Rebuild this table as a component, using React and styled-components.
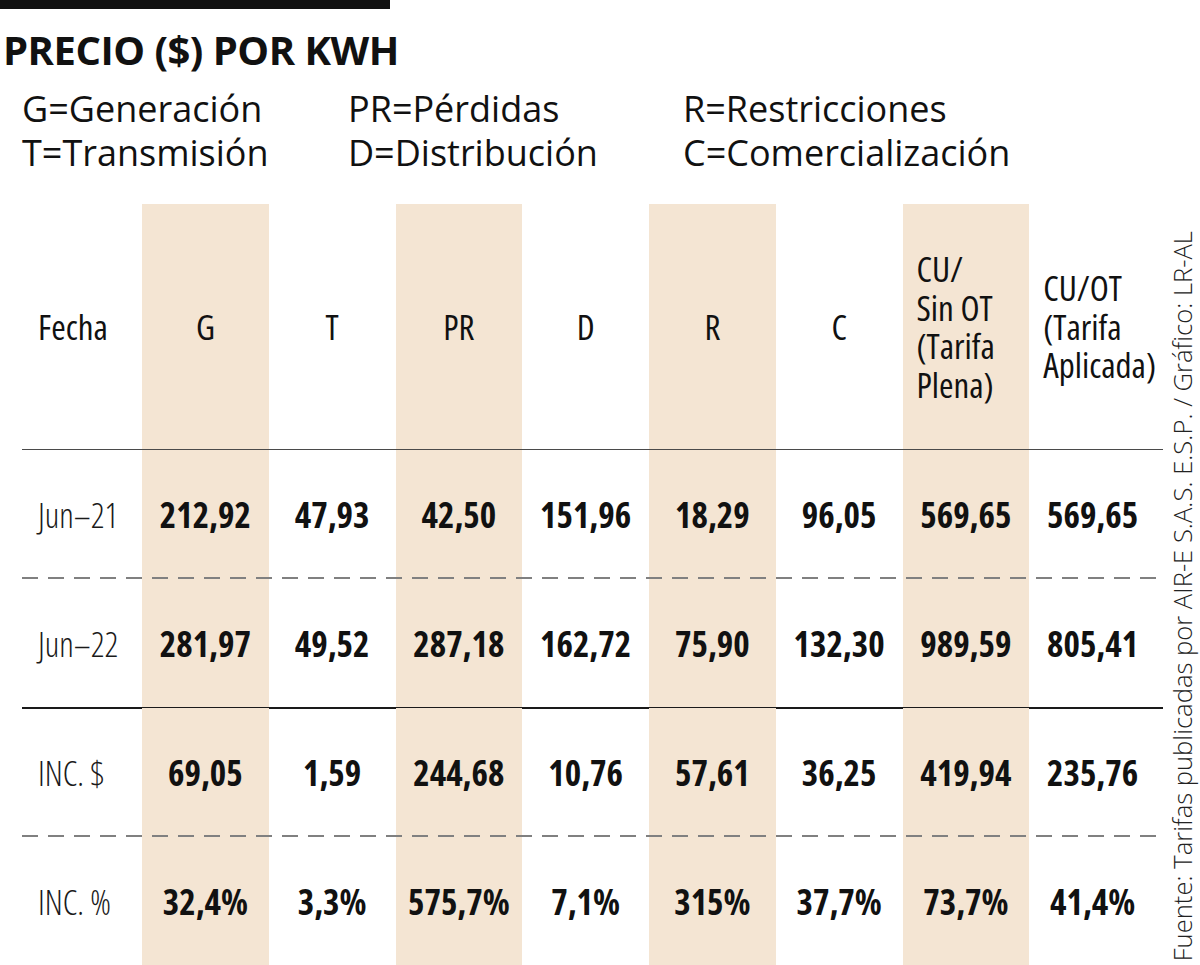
import React from "react"
import styled, { createGlobalStyle } from "styled-components"

const GlobalStyle = createGlobalStyle`
  body {
    margin: 0;
    background: #fff;
    color: #111;
    font-family: "Open Sans", "Liberation Sans", sans-serif;
  }
`

const Page = styled.div`
  display: flex;
  width: 1200px;
  height: 965px;
  overflow: hidden;
  background: #fff;
`

const Main = styled.div`
  width: 1166px;
  flex: none;
`

const TopBar = styled.div`
  width: 390px;
  height: 9px;
  background: #111;
`

const Title = styled.h1`
  margin: 17px 0 0 3px;
  font-size: 40px;
  line-height: 48px;
  font-weight: 700;
  font-stretch: 88%;
  letter-spacing: -0.5px;
  color: #111;
`

const Legend = styled.div`
  display: grid;
  grid-template-columns: 326px 335px auto;
  margin: 13px 0 0 22px;
  font-size: 36px;
  line-height: 44px;
  font-stretch: 94%;
  color: #111;
`

const Table = styled.div`
  margin: 29px 0 0 22px;
  width: 1141px;
`

const Row = styled.div`
  position: relative;
  display: grid;
  grid-template-columns: 120px repeat(8, 126.75px) 1fr;
  height: ${p => p.$h}px;

  &::after {
    content: "";
    position: absolute;
    left: 0;
    right: 0;
    bottom: ${p => (p.$line === "thick" ? -1 : 0)}px;
    height: ${p => (p.$line === "thick" ? 2 : p.$line === "dash" ? 2 : 1)}px;
    background: ${p =>
      p.$line === "dash"
        ? "repeating-linear-gradient(90deg, #808080 0 16px, transparent 16px 26px)"
        : p.$line === "thick"
        ? "#1a1a1a"
        : p.$line === "thin"
        ? "#4a4a4a"
        : "transparent"};
  }
`

const Cell = styled.div`
  display: flex;
  align-items: center;
  justify-content: ${p => (p.$left ? "flex-start" : "center")};
  padding-left: ${p => (p.$left ? p.$pad : 0)}px;
  background: ${p => (p.$shade ? "#f4e5d3" : "transparent")};
`

const HeadText = styled.span`
  font-size: 35px;
  line-height: 38.5px;
  font-weight: 400;
  font-stretch: 75%;
  color: #111;
`

const DateText = styled.span`
  font-size: 34px;
  font-weight: 300;
  font-stretch: 75%;
  color: #1a1a1a;
`

const Value = styled.span`
  font-size: 35px;
  font-weight: 700;
  font-stretch: 75%;
  color: #111;
`

const Side = styled.div`
  flex: 1;
  display: flex;
  flex-direction: column;
  justify-content: flex-end;
  align-items: center;
  padding-bottom: 4px;
`

const Source = styled.div`
  writing-mode: vertical-rl;
  transform: rotate(180deg);
  font-size: 25.6px;
  font-weight: 300;
  color: #222;
  white-space: nowrap;
  line-height: 28px;
`

const shaded = [false, true, false, true, false, true, false, true, false]

const headers = [
  "G",
  "T",
  "PR",
  "D",
  "R",
  "C",
  ["CU/", "Sin OT", "(Tarifa", "Plena)"],
  ["CU/OT", "(Tarifa", "Aplicada)"],
]

const rows = [
  { label: "Jun–21", line: "dash", values: ["212,92", "47,93", "42,50", "151,96", "18,29", "96,05", "569,65", "569,65"] },
  { label: "Jun–22", line: "thick", values: ["281,97", "49,52", "287,18", "162,72", "75,90", "132,30", "989,59", "805,41"] },
  { label: "INC. $", line: "dash", values: ["69,05", "1,59", "244,68", "10,76", "57,61", "36,25", "419,94", "235,76"] },
  { label: "INC. %", line: null, values: ["32,4%", "3,3%", "575,7%", "7,1%", "315%", "37,7%", "73,7%", "41,4%"] },
]

export default function App() {
  return (
    <>
      <GlobalStyle />
      <Page>
        <Main>
          <TopBar />
          <Title>PRECIO ($) POR KWH</Title>
          <Legend>
            <div>G=Generación</div>
            <div>PR=Pérdidas</div>
            <div>R=Restricciones</div>
            <div>T=Transmisión</div>
            <div>D=Distribución</div>
            <div>C=Comercialización</div>
          </Legend>
          <Table>
            <Row $h={246} $line="thin">
              <Cell $left $pad={16}>
                <HeadText>Fecha</HeadText>
              </Cell>
              {headers.map((h, i) => (
                <Cell key={i} $shade={shaded[i + 1]} $left={Array.isArray(h)} $pad={14}>
                  <HeadText>
                    {Array.isArray(h)
                      ? h.map((l, j) => (
                          <React.Fragment key={j}>
                            {l}
                            {j < h.length - 1 && <br />}
                          </React.Fragment>
                        ))
                      : h}
                  </HeadText>
                </Cell>
              ))}
              <Cell />
            </Row>
            {rows.map(r => (
              <Row key={r.label} $h={129} $line={r.line}>
                <Cell $left $pad={16}>
                  <DateText>{r.label}</DateText>
                </Cell>
                {r.values.map((v, i) => (
                  <Cell key={i} $shade={shaded[i + 1]}>
                    <Value>{v}</Value>
                  </Cell>
                ))}
                <Cell />
              </Row>
            ))}
          </Table>
        </Main>
        <Side>
          <Source>Fuente: Tarifas publicadas por AIR-E S.A.S. E.S.P. / Gráfico: LR-AL</Source>
        </Side>
      </Page>
    </>
  )
}
